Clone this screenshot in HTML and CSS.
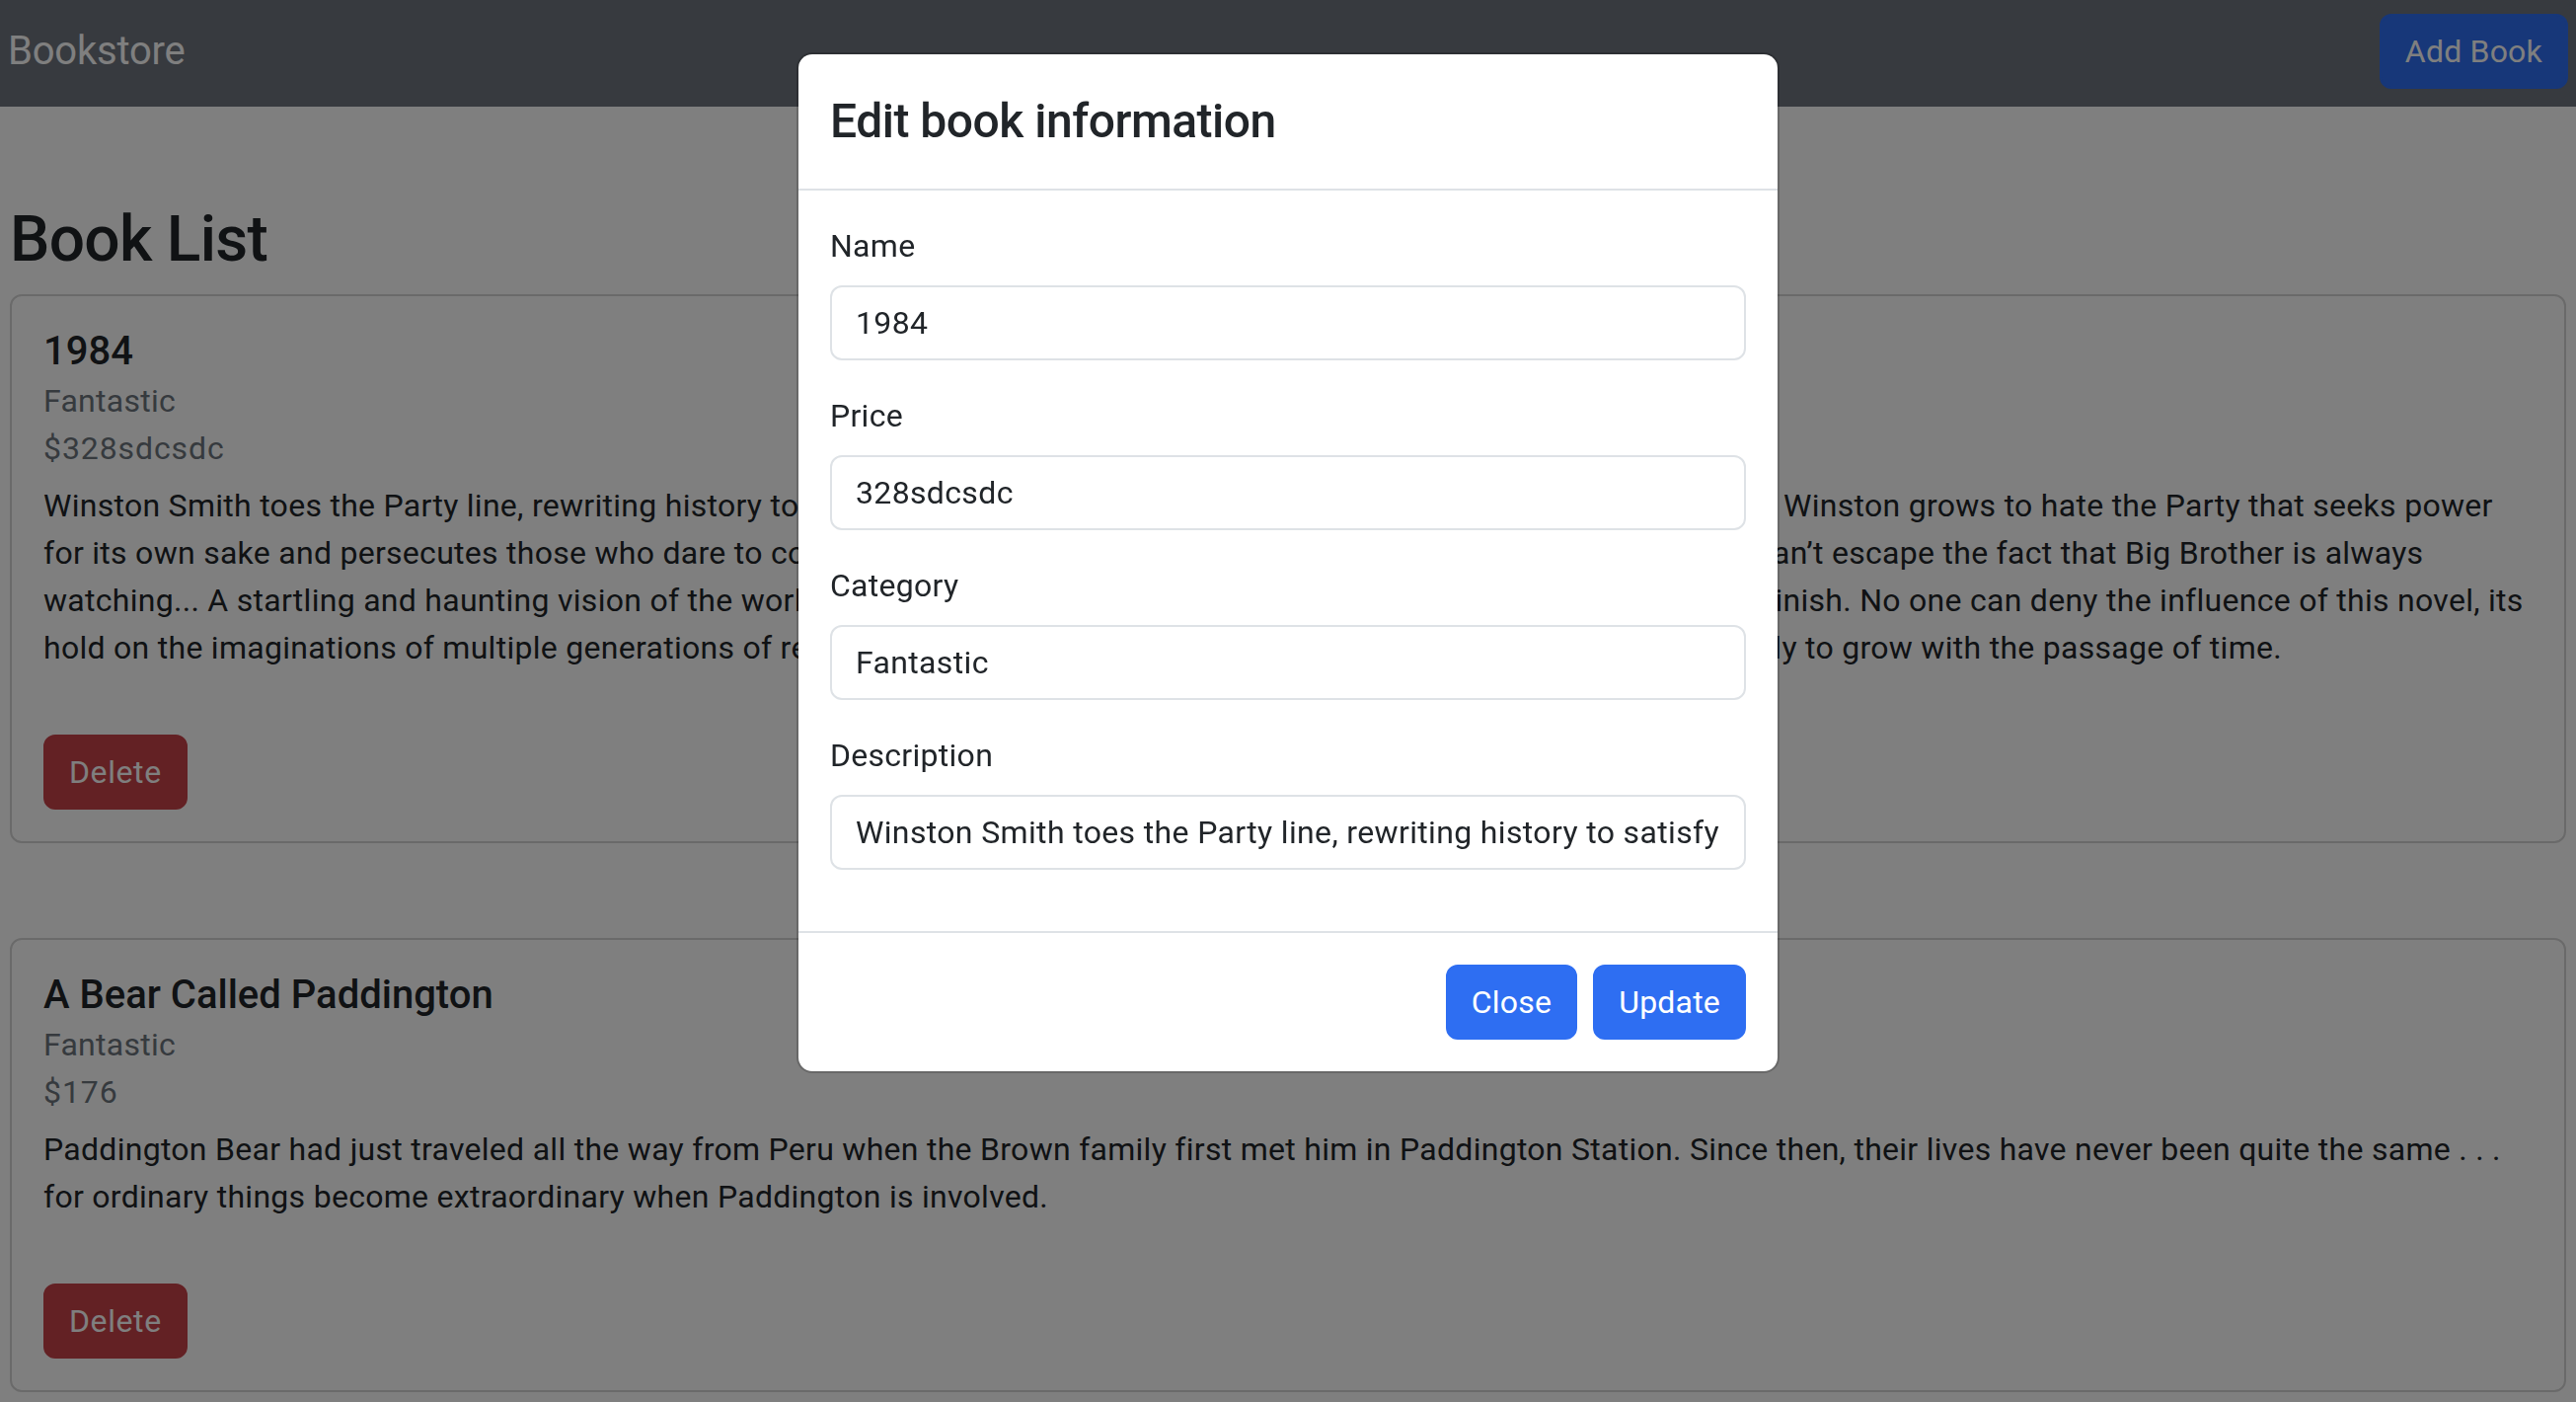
FILE: index.html
```html
<!DOCTYPE html>
<html lang="en">
<head>
<meta charset="utf-8">
<title>Bookstore</title>
<link rel="stylesheet" href="styles.css">
</head>
<body>
<nav class="navbar">
  <a class="navbar-brand" href="#">Bookstore</a>
  <button class="btn btn-primary" type="button">Add Book</button>
</nav>

<main class="page">
  <h2 class="page-title">Book List</h2>

  <div class="card">
    <h5 class="card-title">1984</h5>
    <p class="card-subtitle">Fantastic</p>
    <p class="card-price">$328sdcsdc</p>
    <p class="card-text">Winston Smith toes the Party line, rewriting history to satisfy the demands of the Ministry of Truth. With each lie he writes, Winston grows to hate the Party that seeks power for its own sake and persecutes those who dare to commit thoughtcrimes. But as he starts to think for himself, Winston can’t escape the fact that Big Brother is always watching... A startling and haunting vision of the world, 1984 is so powerful that it is completely convincing from start to finish. No one can deny the influence of this novel, its hold on the imaginations of multiple generations of readers, or the resonance of its warnings—a resonance that seems only to grow with the passage of time.</p>
    <div class="card-actions"><button class="btn btn-danger" type="button">Delete</button></div>
  </div>

  <div class="card">
    <h5 class="card-title">A Bear Called Paddington</h5>
    <p class="card-subtitle">Fantastic</p>
    <p class="card-price">$176</p>
    <p class="card-text">Paddington Bear had just traveled all the way from Peru when the Brown family first met him in Paddington Station. Since then, their lives have never been quite the same . . . for ordinary things become extraordinary when Paddington is involved.</p>
    <div class="card-actions"><button class="btn btn-danger" type="button">Delete</button></div>
  </div>
</main>

<div class="modal-backdrop"></div>

<div class="modal">
  <div class="modal-dialog">
    <div class="modal-content">
      <div class="modal-header">
        <h4 class="modal-title">Edit book information</h4>
      </div>
      <div class="modal-body">
        <div class="field">
          <label class="form-label" for="f-name">Name</label>
          <input class="form-control" id="f-name" type="text" value="1984">
        </div>
        <div class="field">
          <label class="form-label" for="f-price">Price</label>
          <input class="form-control" id="f-price" type="text" value="328sdcsdc">
        </div>
        <div class="field">
          <label class="form-label" for="f-cat">Category</label>
          <input class="form-control" id="f-cat" type="text" value="Fantastic">
        </div>
        <div class="field">
          <label class="form-label" for="f-desc">Description</label>
          <input class="form-control" id="f-desc" type="text" value="Winston Smith toes the Party line, rewriting history to satisfy the demands of the Ministry of Truth.">
        </div>
      </div>
      <div class="modal-footer">
        <button class="btn btn-primary" type="button">Close</button>
        <button class="btn btn-primary" type="button">Update</button>
      </div>
    </div>
  </div>
</div>
</body>
</html>
```

FILE: styles.css
```css
* { box-sizing: border-box; }

html, body {
  margin: 0;
  padding: 0;
}

body {
  font-family: Roboto, "Noto Sans", "Liberation Sans", sans-serif;
  font-size: 32px;
  line-height: 1.5;
  letter-spacing: 0.28px;
  color: #212529;
  background: #ffffff;
  overflow: hidden;
}

/* Navbar */
.navbar {
  height: 108px;
  display: flex;
  align-items: center;
  justify-content: space-between;
  padding: 0 8px 5px 8px;
  background: #6e747e;
}

.navbar-brand {
  font-size: 40px;
  line-height: 60px;
  letter-spacing: -0.2px;
  color: #ffffff;
  text-decoration: none;
}

/* Buttons */
.btn {
  font-family: inherit;
  font-size: 32px;
  line-height: 48px;
  letter-spacing: 0.2px;
  padding: 12px 24px;
  border: 2px solid transparent;
  border-radius: 12px;
  color: #ffffff;
  cursor: pointer;
}

.btn-primary {
  background: #2e6ef2;
  border-color: #2e6ef2;
}

.btn-danger {
  background: #c74249;
  border-color: #c74249;
  letter-spacing: 0.6px;
}

/* Page */
.page {
  padding: 0 10px;
}

.page-title {
  margin: 97px 0 16px 0;
  font-size: 64px;
  line-height: 1.2;
  font-weight: 500;
  letter-spacing: -0.7px;
}

.card {
  border: 2px solid #d4d4d4;
  border-radius: 12px;
  padding: 32px;
  margin-bottom: 96px;
}

.card-title {
  margin: 0 0 2px 0;
  font-size: 40px;
  line-height: 48px;
  font-weight: 500;
  letter-spacing: 0;
}

.card-subtitle {
  margin: 0;
  color: #6c757d;
}

.card-price {
  margin: 0 0 10px 0;
  color: #6c757d;
  letter-spacing: 0.9px;
}

.card-text {
  margin: 0 0 64px 0;
}

.card-actions {
  display: flex;
}

/* Modal */
.modal-backdrop {
  position: fixed;
  inset: 0;
  background: rgba(0, 0, 0, 0.5);
}

.modal {
  position: fixed;
  inset: 0;
  overflow: hidden;
}

.modal-dialog {
  width: 996px;
  margin: 53px auto 0 auto;
}

.modal-content {
  background: #ffffff;
  border: 2px solid rgba(0, 0, 0, 0.175);
  border-radius: 16px;
  background-clip: padding-box;
}

.modal-header {
  padding: 32px;
  border-bottom: 2px solid #dee2e6;
}

.modal-title {
  margin: 0;
  font-size: 48px;
  line-height: 1.5;
  font-weight: 500;
  letter-spacing: -0.5px;
}

.modal-body {
  padding: 32px 32px 30px 32px;
}

.field {
  display: flex;
  flex-direction: column;
  margin-bottom: 32px;
}

.form-label {
  margin-bottom: 16px;
}

.form-control {
  width: 100%;
  font-family: inherit;
  font-size: 32px;
  line-height: 48px;
  letter-spacing: 0.35px;
  padding: 12px 24px;
  color: #212529;
  background: #ffffff;
  border: 2px solid #dee2e6;
  border-radius: 12px;
  outline: none;
}

.modal-footer {
  display: flex;
  justify-content: flex-end;
  padding: 24px;
  border-top: 2px solid #dee2e6;
}

.modal-footer .btn {
  margin: 8px;
}
```
